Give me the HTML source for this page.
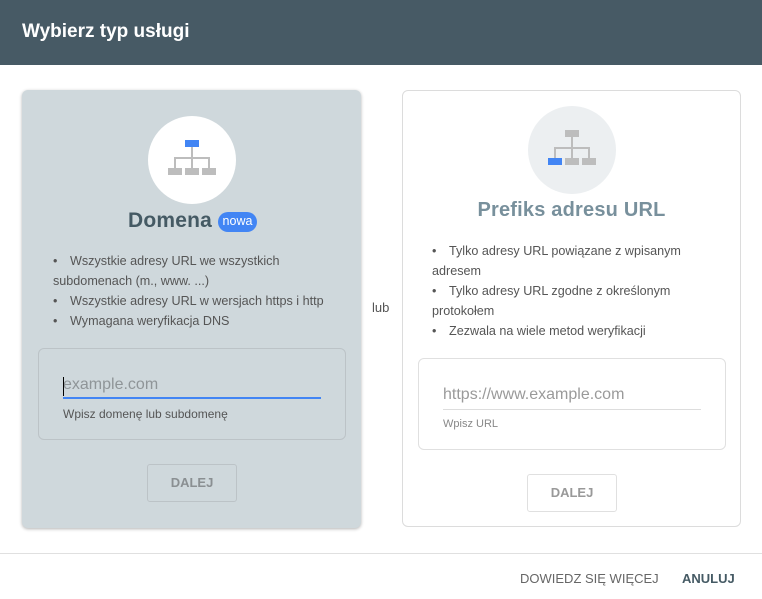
<!DOCTYPE html>
<html><head><meta charset="utf-8"><style>
*{margin:0;padding:0;box-sizing:border-box}
body{width:762px;height:599px;position:relative;background:#fff;font-family:"Liberation Sans",sans-serif;overflow:hidden}
.a{position:absolute;white-space:nowrap}
.hdr{left:0;top:0;width:762px;height:65px;background:#475a65}
.card1{left:22px;top:90px;width:339px;height:438px;background:#cfd8dc;border-radius:6px;box-shadow:0 1px 3px rgba(0,0,0,.3)}
.card2{left:402px;top:90px;width:339px;height:437px;background:#fff;border:1px solid #dcdcdc;border-radius:6px}
.li{font-size:12.6px;color:#555}
.b{display:inline-block;width:17px}
.box{border:1px solid #bcc3c7;border-radius:6px}
.btn{border:1px solid #bcc3c7;border-radius:3px;font-size:13px;font-weight:bold;color:#8a8f92;text-align:center;line-height:36px}
</style></head><body>
<div class="a hdr"></div>
<div class="a" style="left:22px;top:21px;font-size:19px;font-weight:bold;color:#fff">Wybierz typ usługi</div>

<div class="a card1"></div>
<div class="a" style="left:148px;top:116px;width:88px;height:88px;border-radius:50%;background:#fff"></div>
<svg class="a" style="left:148px;top:116px" width="88" height="88" viewBox="148 116 88 88">
<rect x="185" y="140" width="14" height="7" fill="#4285f4"/>
<path d="M192 147V158M175 158H209M175 157V168M192 158V168M209 157V168" stroke="#bdbdbd" stroke-width="2" fill="none"/>
<rect x="168" y="168" width="14" height="7" fill="#bdbdbd"/><rect x="185" y="168" width="14" height="7" fill="#bdbdbd"/><rect x="202" y="168" width="14" height="7" fill="#bdbdbd"/>
</svg>
<div class="a" style="left:128px;top:209px;font-size:21px;font-weight:bold;color:#455a64;letter-spacing:0.2px">Domena</div>
<div class="a" style="left:218px;top:212px;width:39px;height:20px;border-radius:10px;background:#4285f4;color:#fff;font-size:12.5px;text-align:center;line-height:19px">nowa</div>
<div class="a li" style="left:53px;top:254px"><span class="b">•</span>Wszystkie adresy URL we wszystkich</div>
<div class="a li" style="left:53px;top:274px">subdomenach (m., www. ...)</div>
<div class="a li" style="left:53px;top:294px"><span class="b">•</span>Wszystkie adresy URL w wersjach https i http</div>
<div class="a li" style="left:53px;top:314px"><span class="b">•</span>Wymagana weryfikacja DNS</div>
<div class="a box" style="left:38px;top:348px;width:308px;height:92px"></div>
<div class="a" style="left:63px;top:376px;font-size:16px;color:#8f9598">example.com</div>
<div class="a" style="left:63px;top:377px;width:1px;height:19px;background:#000"></div>
<div class="a" style="left:63px;top:397px;width:258px;height:2px;background:#4285f4"></div>
<div class="a" style="left:63px;top:407px;font-size:12px;color:#555">Wpisz domenę lub subdomenę</div>
<div class="a btn" style="left:147px;top:464px;width:90px;height:38px">DALEJ</div>

<div class="a" style="left:372px;top:300px;font-size:13px;color:#555">lub</div>

<div class="a card2"></div>
<div class="a" style="left:528px;top:106px;width:88px;height:88px;border-radius:50%;background:#eceff1"></div>
<svg class="a" style="left:528px;top:106px" width="88" height="88" viewBox="528 106 88 88">
<rect x="565" y="130" width="14" height="7" fill="#bdbdbd"/>
<path d="M572 137V148M555 148H589M555 147V158M572 148V158M589 147V158" stroke="#bdbdbd" stroke-width="2" fill="none"/>
<rect x="548" y="158" width="14" height="7" fill="#4285f4"/><rect x="565" y="158" width="14" height="7" fill="#bdbdbd"/><rect x="582" y="158" width="14" height="7" fill="#bdbdbd"/>
</svg>
<div class="a" style="left:402px;width:339px;text-align:center;top:199px;font-size:20px;font-weight:bold;color:#78909c;letter-spacing:0.2px">Prefiks adresu URL</div>
<div class="a li" style="left:432px;top:244px"><span class="b">•</span>Tylko adresy URL powiązane z wpisanym</div>
<div class="a li" style="left:432px;top:264px">adresem</div>
<div class="a li" style="left:432px;top:284px"><span class="b">•</span>Tylko adresy URL zgodne z określonym</div>
<div class="a li" style="left:432px;top:304px">protokołem</div>
<div class="a li" style="left:432px;top:324px"><span class="b">•</span>Zezwala na wiele metod weryfikacji</div>
<div class="a box" style="left:418px;top:358px;width:308px;height:92px;border-color:#e0e0e0"></div>
<div class="a" style="left:443px;top:386px;font-size:16px;color:#9a9a9a">https://www.example.com</div>
<div class="a" style="left:443px;top:409px;width:258px;height:1px;background:#ddd"></div>
<div class="a" style="left:443px;top:418px;font-size:11px;color:#888">Wpisz URL</div>
<div class="a btn" style="left:527px;top:474px;width:90px;height:38px;border-color:#e0e0e0;color:#999">DALEJ</div>

<div class="a" style="left:0;top:553px;width:762px;height:1px;background:#e0e0e0"></div>
<div class="a" style="left:520px;top:571px;font-size:13px;color:#666">DOWIEDZ SIĘ WIĘCEJ</div>
<div class="a" style="left:682px;top:571px;font-size:13px;font-weight:bold;color:#455a64">ANULUJ</div>
</body></html>
